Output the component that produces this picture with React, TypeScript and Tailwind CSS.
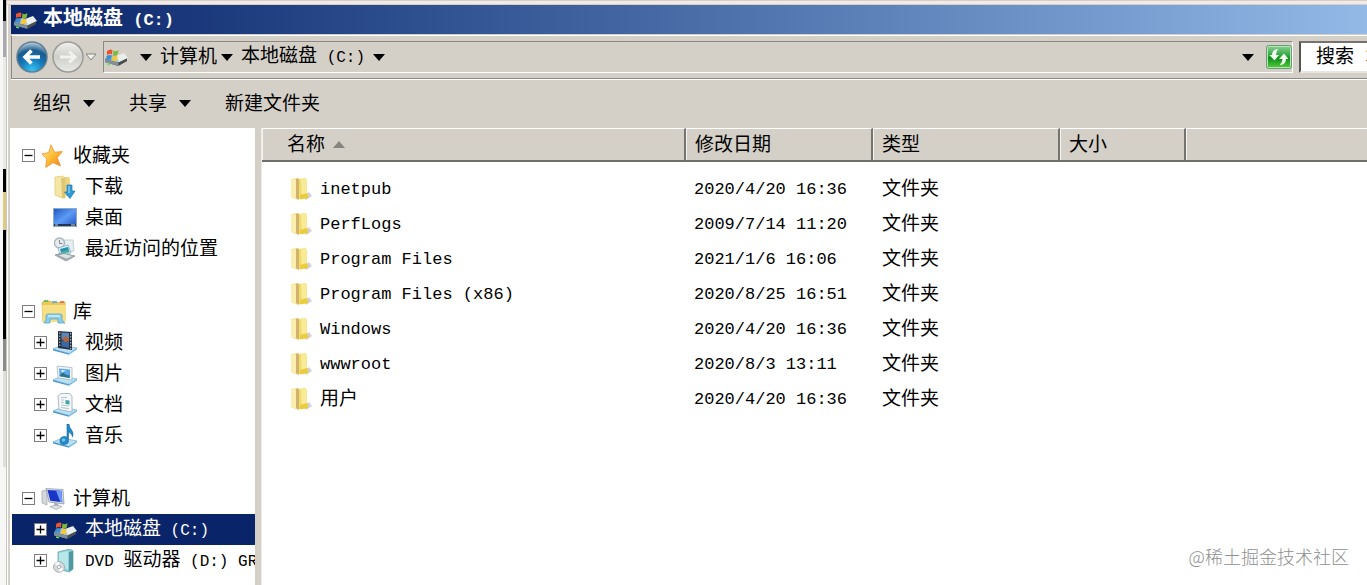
import { useState, type ReactNode } from "react";
import { clsx } from "clsx";

interface FileEntry {
  name: string;
  modified: string;
}

interface TreeItem {
  label: ReactNode;
  icon: ReactNode;
  expandable?: boolean;
  selected?: boolean;
}

interface TreeGroup {
  label: string;
  icon: ReactNode;
  items: TreeItem[];
}

const FILES: FileEntry[] = [
  { name: "inetpub", modified: "2020/4/20 16:36" },
  { name: "PerfLogs", modified: "2009/7/14 11:20" },
  { name: "Program Files", modified: "2021/1/6 16:06" },
  { name: "Program Files (x86)", modified: "2020/8/25 16:51" },
  { name: "Windows", modified: "2020/4/20 16:36" },
  { name: "wwwroot", modified: "2020/8/3 13:11" },
  { name: "用户", modified: "2020/4/20 16:36" },
];

function Latin({ children }: { children: ReactNode }) {
  return <span className="text-base leading-6 whitespace-pre font-['Liberation_Mono',monospace]">{children}</span>;
}

function Arrow({ className }: { className?: string }) {
  return (
    <svg viewBox="0 0 12 7" className={clsx("w-3 h-[7px] shrink-0", className)} fill="currentColor">
      <path d="M0 0h12L6 7z" />
    </svg>
  );
}

function DiskIcon() {
  return (
    <svg viewBox="0 0 24 20" className="w-6 h-5 shrink-0">
      <path d="M1 12l8-4 14 3v3l-9 5L1 15z" fill="#59656b" />
      <path d="M1 12l8-4 14 3-9 4.500z" fill="#b8c3c5" />
      <path d="M12 9l8-3 4 5-9 4z" fill="#e9edeb" />
      <path d="M1 12.500l13 3v3L1 15.500z" fill="#7f9299" />
      <path d="M15 15.500l8-4v2.500l-8 4.500z" fill="#494f50" />
      <path d="M3 4q3-2.500 5.500-1L8 7.500Q5.500 6.500 3 8z" fill="#e8542c" />
      <path d="M9.500 3.500q3 1.500 5-.5l-.8 4.500q-2.200 1.500-4.700.5z" fill="#7fb83b" />
      <path d="M2.500 9Q5 7.500 7.800 8.500L7 13q-2.500-1-4.800.5z" fill="#3d8fd0" />
      <path d="M9 9q2.500 1 4.600-.5L13 13q-2.500 1.500-5 .5z" fill="#f6c92f" />
      <path d="M3 17l3 .8" stroke="#6ce25c" strokeWidth="1.500" />
    </svg>
  );
}

function FolderIcon() {
  return (
    <svg viewBox="0 0 22 24" className="w-[22px] h-6 shrink-0">
      <path d="M14 19l5-4 3 4-6 4z" fill="#b9b9c6" opacity=".65" />
      <path d="M8 2l8-1 1 4v13l1 3-9 1z" fill="#f0dc68" />
      <path d="M11 2l5-1 .8 4v12l-5 3z" fill="#f8eb98" />
      <path d="M1 2l7-1v22l-7-3z" fill="#f3e08c" />
      <path d="M6 2l2-1 1 2v20l-3-2z" fill="#d3b271" />
      <path d="M1 2l5 1v18l-5-1z" fill="#fbefad" />
      <path d="M10 18l7-2 1.500 5-8.500 1.500z" fill="#ebcd3c" />
    </svg>
  );
}

function StarIcon() {
  return (
    <svg viewBox="0 0 24 24" className="size-6 shrink-0">
      <defs>
        <linearGradient id="star" x1="0" y1="0" x2="1" y2="1">
          <stop offset="0" stopColor="#fff0a0" />
          <stop offset=".5" stopColor="#fdbd33" />
          <stop offset="1" stopColor="#ee7a1c" />
        </linearGradient>
      </defs>
      <path
        d="M10 .8l3.400 7.400 8-.6-5.200 6.200 3.300 8.200-7.500-3.300-7.300 4.700 1-8.600L.8 10l6.900-1.400z"
        fill="url(#star)"
        stroke="#ee9a3e"
        strokeWidth=".9"
      />
    </svg>
  );
}

function DownloadsIcon() {
  return (
    <svg viewBox="0 0 24 24" className="size-6 shrink-0">
      <path d="M9 2l7 0 1 3v15l-7 2z" fill="#ecd481" />
      <path d="M2 2l8-1 2 2v20l-3 0-7-3z" fill="#f6e6a3" stroke="#dec67a" strokeWidth=".7" />
      <path d="M8 3l4 0v20l-3 0z" fill="#dfc778" />
      <path d="M14 10h5v6h3l-5 7.500L11.500 17H14z" fill="#2f9bd6" stroke="#1b78b4" strokeWidth=".7" />
      <path d="M15.200 11h1.600v7h-1.600z" fill="#7ac7ee" />
    </svg>
  );
}

function DesktopIcon() {
  return (
    <svg viewBox="0 0 24 24" className="size-6 shrink-0">
      <defs>
        <linearGradient id="desk" x1="0" y1="0" x2="1" y2="1">
          <stop offset="0" stopColor="#1e55c0" />
          <stop offset=".5" stopColor="#5c9bf5" />
          <stop offset="1" stopColor="#2452bf" />
        </linearGradient>
      </defs>
      <rect x=".5" y="2.500" width="23" height="18" fill="url(#desk)" stroke="#8eabc6" />
      <path d="M1 19h22" stroke="#25344f" strokeWidth="2" />
      <path d="M2 19h3M18 19h4" stroke="#b4d5e8" />
    </svg>
  );
}

function RecentIcon() {
  return (
    <svg viewBox="0 0 24 24" className="size-6 shrink-0">
      <path d="M8 3l12 0 1 11-12 2z" fill="#e7eef0" stroke="#b8c6ca" strokeWidth=".8" />
      <circle cx="6.500" cy="6" r="5" fill="#e7ebee" stroke="#a8b4b9" strokeWidth="1.300" />
      <path d="M6.500 3v3.500h3" fill="none" stroke="#7c8b95" />
      <path d="M5 11l10-3 3 8-11 3z" fill="#d9f1f8" stroke="#80a5b4" strokeWidth=".7" />
      <path d="M7 12l8-2 1.500 5-8 2z" fill="#2c8cb8" />
      <path d="M8 15l7-2 1 2-7 2z" fill="#44bc8d" />
      <path d="M2 18l7-2 13 3-9 5z" fill="#a5b0b6" stroke="#7d898f" strokeWidth=".7" />
      <path d="M6 18.500l5-1.500 8 2-5 2.500z" fill="#dfe5e7" />
    </svg>
  );
}

function LibraryIcon() {
  return (
    <svg viewBox="0 0 26 24" className="w-[26px] h-6 shrink-0 -mr-0.5">
      <path d="M1 3l2-2h6l2 2 13-1v19l-22 1z" fill="#e9c95c" stroke="#cda944" strokeWidth=".7" />
      <path d="M3 1h4" stroke="#54b54b" strokeWidth="1.500" />
      <path d="M11 2h5" stroke="#4d9bd8" strokeWidth="1.500" />
      <path d="M19 2h4" stroke="#e0623c" strokeWidth="1.500" />
      <path d="M1 5h24v16l-2 1H2z" fill="#f6df85" />
      <path d="M5 16q0-2 2-2h12q2 0 2 2v4l3 3h-7v-4H9v4H3l2-3z" fill="#89cdea" stroke="#5aa6cb" strokeWidth=".8" />
      <path d="M7 16h12" stroke="#d5f1fc" strokeWidth="1.500" />
    </svg>
  );
}

/* Blue tray that every library item stands on */
function Tray({ children }: { children: ReactNode }) {
  return (
    <svg viewBox="0 0 24 24" className="size-6 shrink-0">
      <path d="M0 18l9-4 15 3-8 5.500z" fill="#b9e0f4" stroke="#72b0d5" strokeWidth=".7" />
      <path d="M0 18l16 4.500v1.300L0 19.500z" fill="#4d97c6" />
      <path d="M16 22.500l8-5.500v1.500l-8 5.300z" fill="#77bce0" />
      {children}
    </svg>
  );
}

function VideoIcon() {
  return (
    <Tray>
      <path d="M5 0l14 1v18L5 17z" fill="#26323e" />
      <path d="M8.500 1.500l7.500.5v7l-7.500-.5z" fill="#5b88bb" />
      <path d="M8.500 9.500l7.500.5v7l-7.500-1.500z" fill="#3a67a6" />
      <path d="M9 8l4-3 3 3v2l-4 1z" fill="#b3653c" />
      <path d="M6.700 1.500v15M17.600 2v16" stroke="#9fb0bb" strokeWidth="1.200" strokeDasharray="1.500 1.500" />
    </Tray>
  );
}

function PictureIcon() {
  return (
    <Tray>
      <path d="M4 4l15 1.500V18L5 16z" fill="#edf3f6" stroke="#a8b9c2" strokeWidth=".8" />
      <path d="M6 6.500l11 1v8.500l-10.500-1.500z" fill="#5aa5e8" />
      <path d="M6.500 14q3-5 5-2.500t5 1.500v3z" fill="#2e7184" />
      <path d="M8 8l5 .5-4 2z" fill="#dff1ff" />
    </Tray>
  );
}

function DocumentIcon() {
  return (
    <Tray>
      <path d="M5 3l3-2.500 9 0 2 3v15.500L6 16.500z" fill="#f4f7f8" stroke="#a4b2b9" strokeWidth=".9" />
      <path d="M8 4.500h6M8 7h3M8 9.500h3M8 12l8 1M8 14.500l8 1.200" stroke="#a9bfca" strokeWidth=".9" />
      <path d="M12.500 7l4 .5v4l-4-.5z" fill="#45a2ad" />
    </Tray>
  );
}

function MusicIcon() {
  return (
    <Tray>
      <path
        d="M14 0h2q0 3 2.500 6t1 7q0-3-4-5v8.500q0 4-4.500 4t-4-4 4-4q1.800-.2 3 .7z"
        fill="#2289c9"
        stroke="#1765a3"
        strokeWidth=".6"
      />
      <circle cx="10.500" cy="16" r="1.800" fill="#6cc6ef" />
    </Tray>
  );
}

function ComputerIcon() {
  return (
    <svg viewBox="0 0 24 24" className="size-6 shrink-0">
      <path d="M1 4l5-1v15l-5-2z" fill="#d5d9db" stroke="#9da5a9" strokeWidth=".7" />
      <path d="M5 1.500l17 1L23 17 8 15z" fill="#d4dbe6" stroke="#8a94a4" strokeWidth=".7" />
      <path d="M6.500 3l14 .8.8 11.500-12-1.600z" fill="#1a35c8" />
      <path d="M15 3.400l5.500.4.8 11.500-2-.3z" fill="#6f9cf5" />
      <path d="M13 16l4 .5.5 3h-4z" fill="#a2aab1" />
      <path d="M9 19.500l6-1.500 6 1.500-6 3z" fill="#dfe3e5" stroke="#98a0a5" strokeWidth=".7" />
    </svg>
  );
}

function DvdIcon() {
  return (
    <svg viewBox="0 0 24 24" className="size-6 shrink-0">
      <path d="M5 3l12-3 3 2v18l-4 3-11-3z" fill="#8ed0d6" stroke="#68a6af" strokeWidth=".8" />
      <path d="M16 3l4-1v18l-4 3z" fill="#5298a2" />
      <path d="M6 4l9-2v18l-9-1z" fill="#b8e7ea" />
      <ellipse cx="6" cy="18" rx="5.500" ry="5.300" fill="#d5d8dc" stroke="#999fa5" strokeWidth=".8" />
      <path d="M6 18L1.500 15q2-2.500 5-2.300zM6 18l5 2q-2 3-5 3z" fill="#f7f7fa" />
      <circle cx="6" cy="18" r="1.600" fill="#fff" stroke="#8d949b" strokeWidth=".7" />
    </svg>
  );
}

function NavButtonsArt({ forward }: { forward?: boolean }) {
  return (
    <svg viewBox="0 0 32 32" className="size-8">
      <defs>
        <radialGradient id="back" cx=".5" cy=".95" r=".9">
          <stop offset="0" stopColor="#38c5f4" />
          <stop offset=".45" stopColor="#1479b8" />
          <stop offset=".75" stopColor="#1c5b8d" />
          <stop offset="1" stopColor="#a6c2d4" />
        </radialGradient>
        <linearGradient id="fwd" x1="0" y1="0" x2="0" y2="1">
          <stop offset="0" stopColor="#efefec" />
          <stop offset=".5" stopColor="#cfcfca" />
          <stop offset="1" stopColor="#e9e9e6" />
        </linearGradient>
      </defs>
      <circle
        cx="16"
        cy="16"
        r="15"
        fill={forward ? "url(#fwd)" : "url(#back)"}
        stroke={forward ? "#9b9b97" : "#617f91"}
        strokeWidth="1.500"
      />
      {forward ? (
        <path d="M8 16h14M17 10.500l6 5.500-6 5.500" fill="none" stroke="#f2f2ef" strokeWidth="3" />
      ) : (
        <path d="M24 16H10M15.500 9.500L9 16l6.500 6.500" fill="none" stroke="#fff" strokeWidth="3.500" />
      )}
    </svg>
  );
}

function RefreshIcon() {
  return (
    <svg viewBox="0 0 26 24" className="w-[26px] h-6">
      <defs>
        <linearGradient id="refresh" x1="0" y1="0" x2="0" y2="1">
          <stop offset="0" stopColor="#8fd39a" />
          <stop offset=".45" stopColor="#2ba43a" />
          <stop offset=".55" stopColor="#0b8f18" />
          <stop offset="1" stopColor="#5bd040" />
        </linearGradient>
      </defs>
      <rect x=".5" y=".5" width="25" height="23" rx="2" fill="url(#refresh)" stroke="#6f9a77" />
      <rect x="1.500" y="1.500" width="23" height="21" rx="1" fill="none" stroke="#b4e5b5" />
      <path d="M11 4Q6 5 6 10H3.500l5 5.500 4.500-5.500h-3q0-3 2-5.500z" fill="#f1fbf1" />
      <path d="M15 20q5-1 5-6h2.500l-4.500-5.500L13 14h3.500q0 3-2.500 5.500z" fill="#f1fbf1" />
    </svg>
  );
}

const GROUPS: TreeGroup[] = [
  {
    label: "收藏夹",
    icon: <StarIcon />,
    items: [
      { label: "下载", icon: <DownloadsIcon /> },
      { label: "桌面", icon: <DesktopIcon /> },
      { label: "最近访问的位置", icon: <RecentIcon /> },
    ],
  },
  {
    label: "库",
    icon: <LibraryIcon />,
    items: [
      { label: "视频", icon: <VideoIcon />, expandable: true },
      { label: "图片", icon: <PictureIcon />, expandable: true },
      { label: "文档", icon: <DocumentIcon />, expandable: true },
      { label: "音乐", icon: <MusicIcon />, expandable: true },
    ],
  },
  {
    label: "计算机",
    icon: <ComputerIcon />,
    items: [
      { label: <>本地磁盘<Latin> (C:)</Latin></>, icon: <DiskIcon />, expandable: true, selected: true },
      { label: <><Latin>DVD </Latin>驱动器<Latin> (D:) GR</Latin></>, icon: <DvdIcon />, expandable: true },
    ],
  },
];

function Toggle({ open, label, onClick }: { open?: boolean; label: string; onClick?: () => void }) {
  return (
    <button aria-label={label} onClick={onClick} className="size-[13px] shrink-0">
      <svg viewBox="0 0 13 13" className="size-[13px]">
        <rect x=".5" y=".5" width="12" height="12" fill="#fff" stroke="#7d7d7d" />
        <path d={open ? "M2.500 6.500h8" : "M2.500 6.500h8M6.500 2.500v8"} stroke="#000" strokeWidth="1.300" />
      </svg>
    </button>
  );
}

function Sidebar() {
  const [closed, setClosed] = useState<string[]>([]);

  function toggle(label: string) {
    setClosed((c) => (c.includes(label) ? c.filter((l) => l !== label) : [...c, label]));
  }

  return (
    <nav className="w-[245px] shrink-0 bg-white pt-3 overflow-hidden flex flex-col gap-8">
      {GROUPS.map((group) => (
        <div key={group.label}>
          <div className="h-[31px] pl-3 flex items-center">
            <Toggle open={!closed.includes(group.label)} label={group.label} onClick={() => toggle(group.label)} />
            <a href="#" className="ml-1.5 flex items-center gap-2 whitespace-nowrap">
              {group.icon}
              {group.label}
            </a>
          </div>
          {!closed.includes(group.label) &&
            group.items.map((item, i) => (
              <div
                key={i}
                className={clsx("h-[31px] ml-0.5 pl-[22px] flex items-center", item.selected && "bg-[#0a246a] text-white")}
              >
                {item.expandable ? <Toggle label="展开" /> : <span className="w-[13px] shrink-0" />}
                <a href="#" className="ml-1.5 flex items-center gap-2 whitespace-nowrap">
                  {item.icon}
                  <span>{item.label}</span>
                </a>
              </div>
            ))}
        </div>
      ))}
    </nav>
  );
}

function HeaderCell({ children, className }: { children?: ReactNode; className?: string }) {
  return (
    <th
      className={clsx(
        "h-[34px] p-0 text-left font-normal bg-[#d4d0c8] border-t border-t-white border-b-2 border-b-[#6e6e6a] shadow-[inset_1px_0_0_#f4f3f0]",
        className
      )}
    >
      {children}
    </th>
  );
}

function FileTable() {
  const edge = "border-r-2 border-r-[#74736d] pl-[9px]";
  const mono = "text-[17px] leading-6 font-['Liberation_Mono',monospace]";
  return (
    <table className="w-full table-fixed border-separate border-spacing-0">
      <colgroup>
        <col className="w-[424px]" />
        <col className="w-[187px]" />
        <col className="w-[187px]" />
        <col className="w-[126px]" />
        <col />
      </colgroup>
      <thead>
        <tr>
          <HeaderCell className="border-r-2 border-r-[#74736d] pl-[25px]">
            <button className="flex items-center gap-2">
              名称
              <Arrow className="rotate-180 text-[#85847f]" />
            </button>
          </HeaderCell>
          <HeaderCell className={edge}>修改日期</HeaderCell>
          <HeaderCell className={edge}>类型</HeaderCell>
          <HeaderCell className={edge}>大小</HeaderCell>
          <HeaderCell />
        </tr>
      </thead>
      <tbody className="before:block before:h-[9px]">
        {FILES.map((file) => (
          <tr key={file.name} className="h-[35px]">
            <td className="p-0 pl-7">
              <span className="flex items-center gap-2">
                <FolderIcon />
                <span>
                  <span className={file.name === "用户" ? "" : mono}>{file.name}</span>
                </span>
              </span>
            </td>
            <td className="p-0 pl-2">
              <span className={mono}>{file.modified}</span>
            </td>
            <td className="p-0 pl-[9px]">文件夹</td>
            <td />
            <td />
          </tr>
        ))}
      </tbody>
    </table>
  );
}

/* Sliver of the window that lies behind this one */
function BackgroundSliver() {
  return (
    <div className="w-1.5 shrink-0 flex flex-col bg-[#f7f7f5] pl-[3px]">
      <div className="h-[21px] bg-black" />
      <div className="h-9 bg-[#a9a9ad]" />
      <div className="h-[112px] bg-[#e9e9e6]" />
      <div className="h-[23px] bg-black" />
      <div className="h-[38px] bg-[#d9cc82]" />
      <div className="h-[109px] bg-black" />
      <div className="h-8 bg-[#8b8b8b]" />
      <div className="h-24 bg-[#dededb]" />
    </div>
  );
}

export default function App() {
  return (
    <div className="min-h-screen flex overflow-hidden relative text-[19px] leading-6 text-black font-['Liberation_Sans','Noto_Sans_CJK_SC',sans-serif]">
      <BackgroundSliver />
      <div className="flex-1 min-w-0 flex flex-col bg-[#d4d0c8] border-l border-[#c9c6c0]">
        <div className="h-[5px] bg-[#f3e9e6] border-y border-[#d4d0c8]" />
        <div className="flex-1 flex flex-col border-l border-white pl-0.5">
          {/* Title bar */}
          <header className="ml-px h-[29px] pl-0.5 flex items-center gap-1.5 text-white bg-linear-to-r from-[#0a246a] to-[#93b9e7]">
            <DiskIcon />
            <h1 className="text-xl leading-6 font-bold">
              本地磁盘
              <span className="text-[17px] leading-6 whitespace-pre font-['Liberation_Mono',monospace]"> (C:)</span>
            </h1>
          </header>

          {/* Address bar */}
          <div className="mt-px ml-px h-11 flex items-center border-t border-t-white border-l border-l-[#8a8984] border-b border-b-[#8a8984] shadow-[0_1px_0_#fff]">
            <div className="flex items-center pl-1">
              <button aria-label="后退">
                <NavButtonsArt />
              </button>
              <button aria-label="前进" className="ml-1">
                <NavButtonsArt forward />
              </button>
              <button aria-label="历史记录" className="ml-px">
                <svg viewBox="0 0 12 8" className="w-3 h-2">
                  <path d="M1 1h10L6 7z" fill="#f2f1ed" stroke="#85847f" />
                </svg>
              </button>
            </div>
            <div className="ml-1.5 h-8 flex-1 min-w-0 flex items-center border border-[#8a8984] border-b-white border-r-white">
              <DiskIcon />
              <Arrow className="ml-3" />
              <button className="ml-2">计算机</button>
              <Arrow className="ml-1" />
              <button className="ml-2">
                本地磁盘<Latin> (C:)</Latin>
              </button>
              <Arrow className="ml-2" />
              <button aria-label="以前的位置" className="ml-auto">
                <Arrow />
              </button>
              <button aria-label="刷新" className="ml-3">
                <RefreshIcon />
              </button>
            </div>
            <input
              aria-label="搜索"
              placeholder="搜索 本地磁盘 (C:)"
              className="ml-1.5 w-[68px] h-8 pl-[15px] pt-0.5 bg-white border-2 border-r-0 border-t-[#74736d] border-l-[#55544f] border-b-[#e8e6e0] placeholder:text-black outline-none font-['Liberation_Mono','Noto_Sans_CJK_SC',monospace]"
            />
          </div>

          {/* Toolbar */}
          <div className="h-[49px] pl-[23px] flex items-center gap-[34px]">
            <button className="flex items-center gap-3">
              组织
              <Arrow />
            </button>
            <button className="flex items-center gap-3">
              共享
              <Arrow />
            </button>
            <button>新建文件夹</button>
          </div>

          <div className="flex-1 flex">
            <Sidebar />
            <main className="flex-1 min-w-0 ml-[6px] bg-white border-l border-[#eeece7]">
              <FileTable />
            </main>
          </div>
        </div>
      </div>
      <p className="absolute right-[18px] bottom-[17px] text-lg leading-6 text-[#8f8f8f] font-['Noto_Sans_CJK_SC',sans-serif] font-light">
        @稀土掘金技术社区
      </p>
    </div>
  );
}
